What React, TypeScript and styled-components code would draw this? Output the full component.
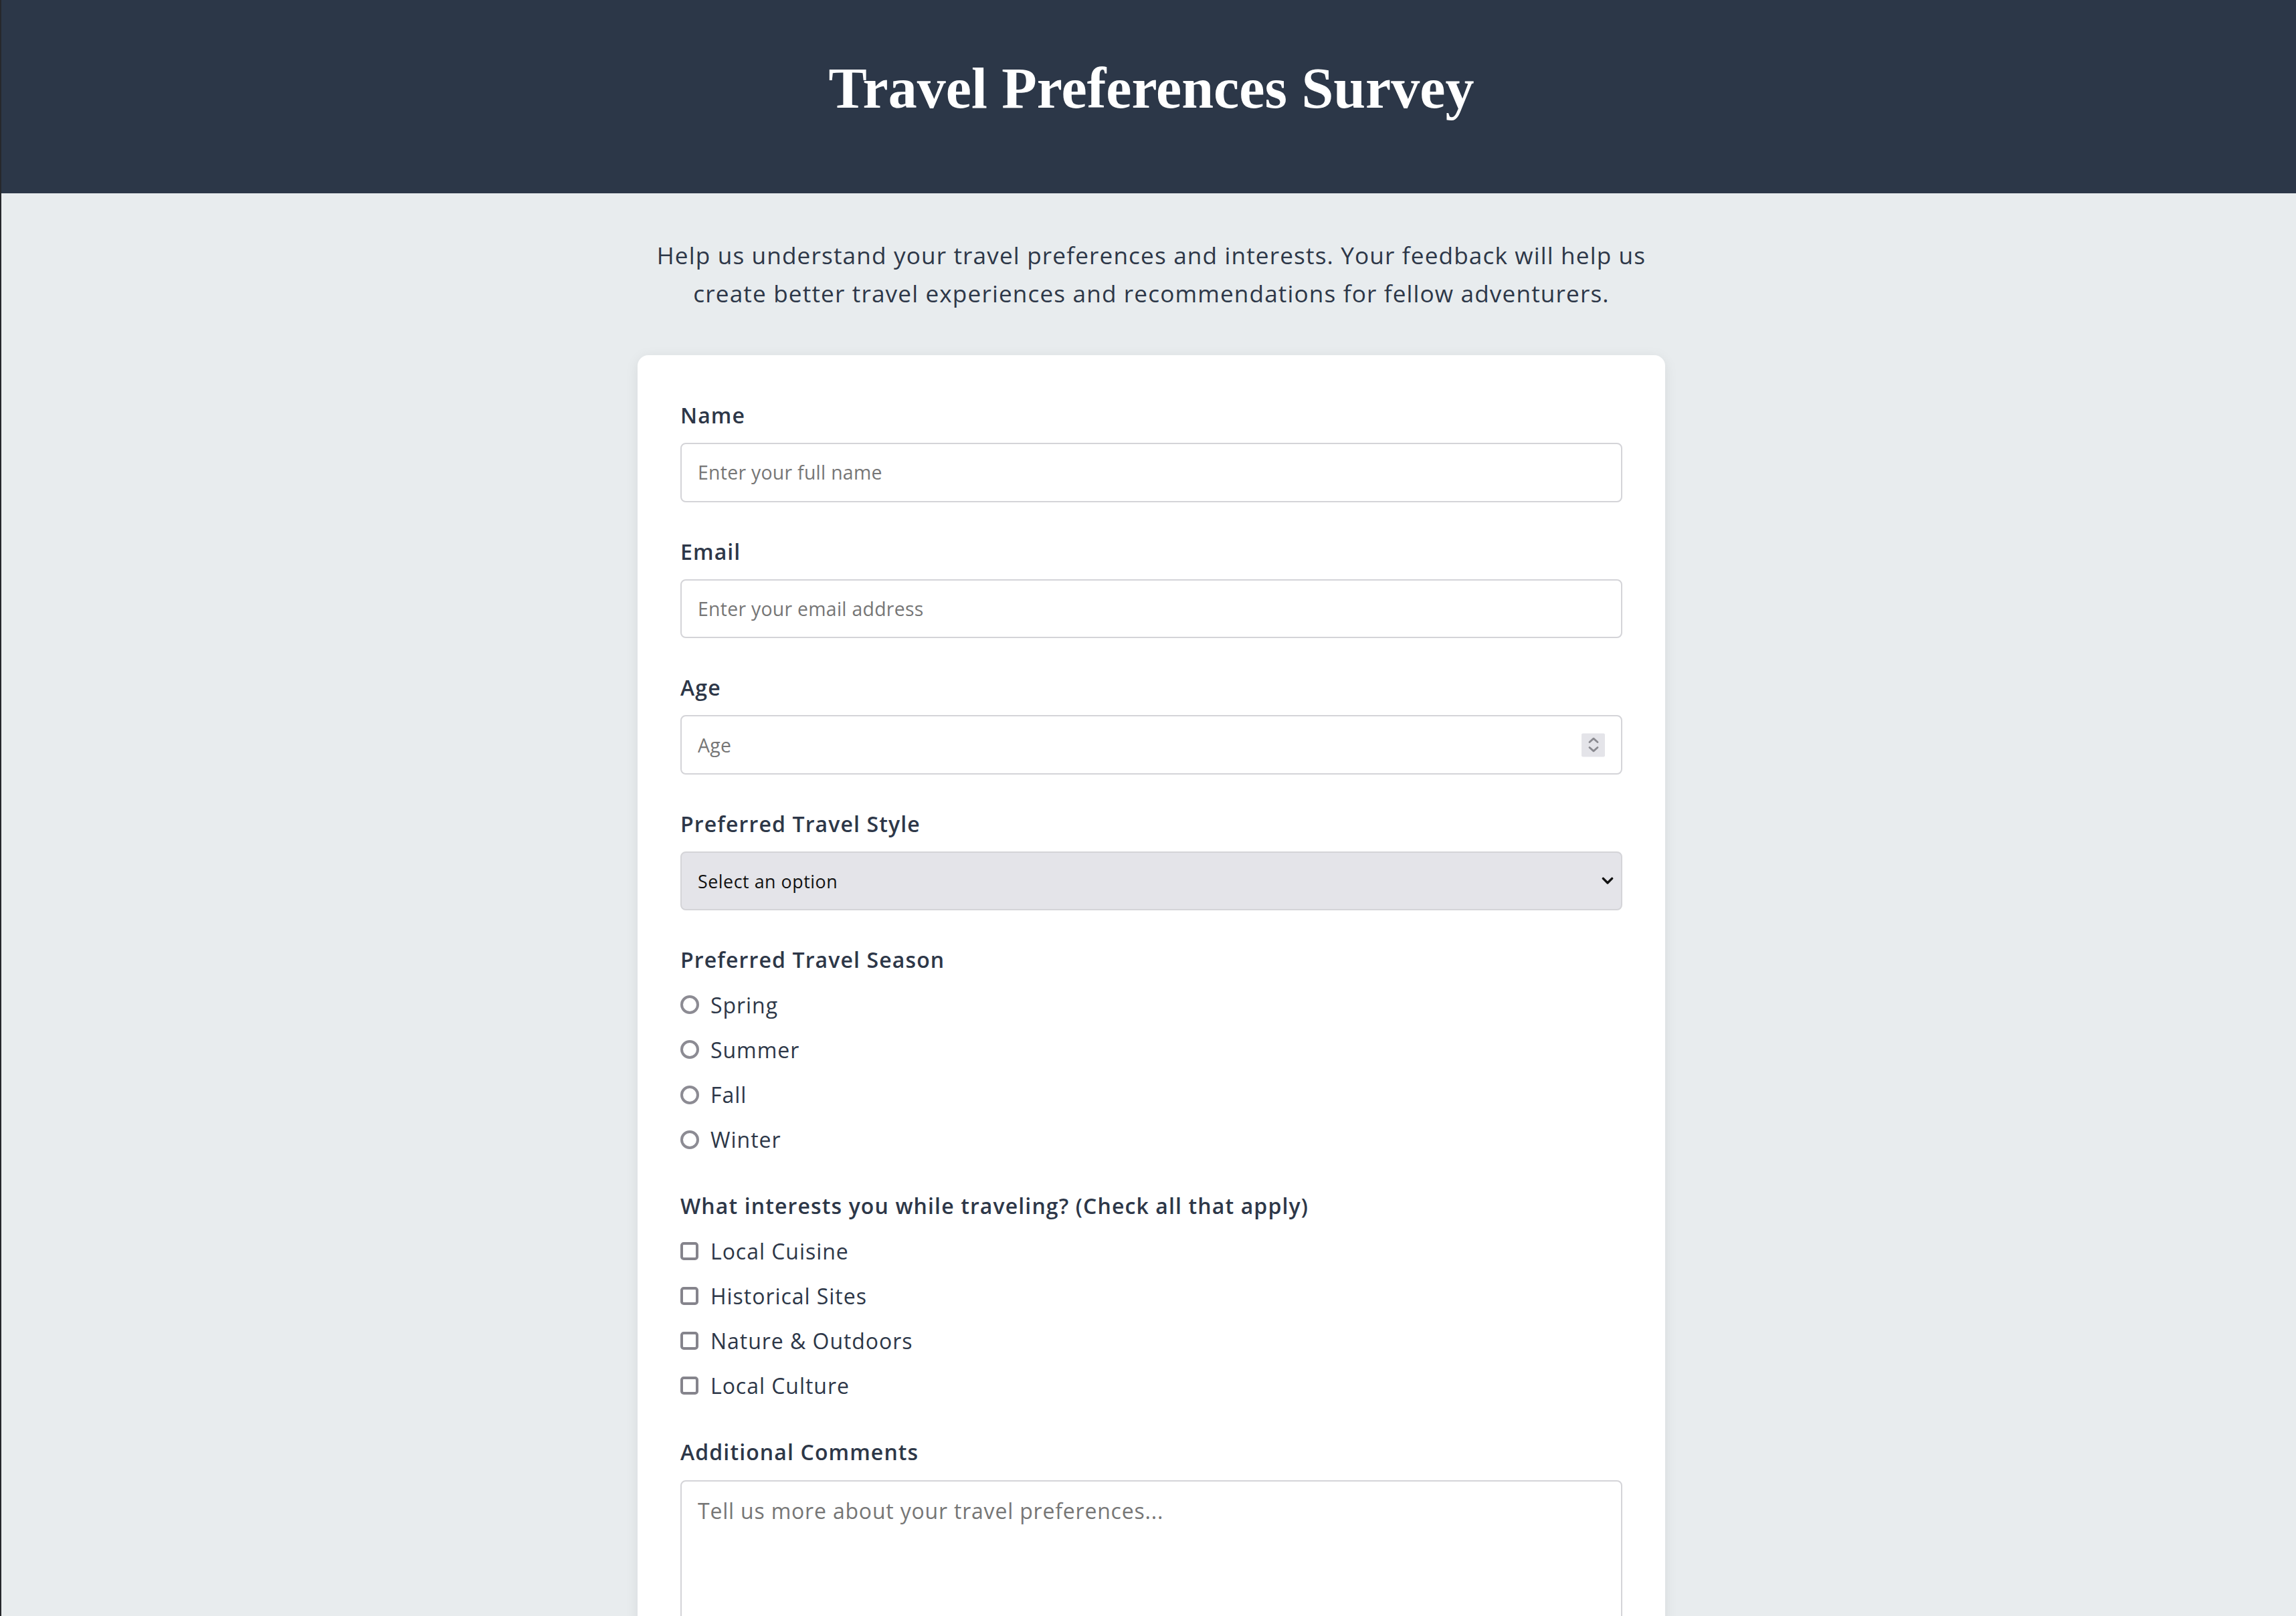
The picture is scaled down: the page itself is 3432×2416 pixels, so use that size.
import React from "react";
import styled, { createGlobalStyle } from "styled-components";

const GlobalStyle = createGlobalStyle`
  html { zoom: 2; }
  *, *::before, *::after { box-sizing: border-box; }
  body {
    margin: 0;
    background: #e8ecee;
    border-left: 1px solid #26282c;
    font-family: "Open Sans", "Noto Sans", Arial, sans-serif;
    letter-spacing: 0.03em;
    color: #2d3748;
  }
`;

const Header = styled.header`
  background: #2c3748;
  padding: 41px 16px 53.5px 20px;
  text-align: center;
`;

const Title = styled.h1`
  margin: 0;
  font-family: "Liberation Serif", "Times New Roman", serif;
  font-weight: 700;
  font-size: 43px;
  line-height: 50px;
  letter-spacing: 0;
  color: #ffffff;
`;

const Main = styled.main`
  max-width: 804px;
  margin: 0 auto;
  padding: 32px 16px 32px 20px;
`;

const Intro = styled.p`
  max-width: 745px;
  margin: 0 auto 32px;
  text-align: center;
  font-size: 17.6px;
  line-height: 28.5px;
  letter-spacing: 0.032em;
  color: #2d3748;
`;

const Card = styled.form`
  background: #ffffff;
  border-radius: 8px;
  padding: 32px;
  box-shadow: 0 2px 10px rgba(0, 0, 0, 0.08);
`;

const Group = styled.div`
  margin-bottom: 24px;
`;

const Label = styled.label`
  display: block;
  margin-bottom: 8px;
  font-size: 16px;
  font-weight: 650;
  line-height: 25.6px;
  letter-spacing: 0.035em;
  color: #2d3748;
`;

const fieldBase = `
  display: block;
  width: 100%;
  border: 1px solid #d4d4d8;
  border-radius: 4px;
  font-family: inherit;
  outline: none;
`;

const TextInput = styled.input`
  ${fieldBase}
  height: 44.2px;
  padding: 0 12px;
  font-size: 14.2px;
  letter-spacing: 0.01em;
  color: #2d3748;
  background: #ffffff;
  &::placeholder { color: #767676; }
  &::-webkit-inner-spin-button,
  &::-webkit-outer-spin-button { -webkit-appearance: none; margin: 0; }
  -moz-appearance: textfield;
`;

const FieldWrap = styled.div`
  position: relative;
`;

const Spinner = styled.div`
  position: absolute;
  right: 13px;
  top: 50%;
  transform: translateY(-50%);
  width: 17.5px;
  height: 17.5px;
  background: #e4e4e9;
  border-radius: 1px;
  display: flex;
  align-items: center;
  justify-content: center;
  pointer-events: none;
`;

const Select = styled.select`
  ${fieldBase}
  appearance: none;
  -webkit-appearance: none;
  height: 44.2px;
  padding: 0 12px;
  font-size: 13.4px;
  letter-spacing: 0.02em;
  color: #111111;
  background: #e4e4e9;
`;

const SelectChevron = styled.svg`
  position: absolute;
  right: 6.5px;
  top: 50%;
  transform: translateY(-50%);
  pointer-events: none;
`;

const OptionRow = styled.label`
  display: flex;
  align-items: center;
  margin-bottom: 8px;
  font-size: 16px;
  line-height: 25.6px;
  color: #2d3748;
`;

const Radio = styled.input.attrs({ type: "radio" })`
  appearance: none;
  -webkit-appearance: none;
  width: 14px;
  height: 14px;
  margin: 0 8.5px 0 0;
  border: 2px solid #8c8b93;
  border-radius: 50%;
  background: #ffffff;
  flex-shrink: 0;
`;

const Checkbox = styled.input.attrs({ type: "checkbox" })`
  appearance: none;
  -webkit-appearance: none;
  width: 13.5px;
  height: 13.5px;
  margin: 0 9px 0 0;
  border: 2px solid #85848c;
  border-radius: 2.5px;
  background: #ffffff;
  flex-shrink: 0;
`;

const TextArea = styled.textarea`
  ${fieldBase}
  height: 109px;
  padding: 12px;
  font-size: 16px;
  line-height: 20px;
  letter-spacing: 0.025em;
  color: #2d3748;
  background: #ffffff;
  resize: vertical;
  &::placeholder { color: #767676; }
`;

const seasons = ["Spring", "Summer", "Fall", "Winter"];
const interests = ["Local Cuisine", "Historical Sites", "Nature & Outdoors", "Local Culture"];

export default function App() {
  return (
    <>
      <GlobalStyle />
      <Header>
        <Title>Travel Preferences Survey</Title>
      </Header>
      <Main>
        <Intro>
          Help us understand your travel preferences and interests. Your feedback will help us
          create better travel experiences and recommendations for fellow adventurers.
        </Intro>
        <Card onSubmit={(e) => e.preventDefault()}>
          <Group>
            <Label htmlFor="name">Name</Label>
            <TextInput id="name" type="text" placeholder="Enter your full name" />
          </Group>
          <Group>
            <Label htmlFor="email">Email</Label>
            <TextInput id="email" type="email" placeholder="Enter your email address" />
          </Group>
          <Group>
            <Label htmlFor="age">Age</Label>
            <FieldWrap>
              <TextInput id="age" type="number" placeholder="Age" />
              <Spinner>
                <svg width="9" height="13" viewBox="0 0 9 13" fill="none">
                  <path d="M1.5 4.5 L4.5 1.8 L7.5 4.5" stroke="#8a8a90" strokeWidth="1.4" strokeLinecap="round" strokeLinejoin="round" />
                  <path d="M1.5 8.5 L4.5 11.2 L7.5 8.5" stroke="#8a8a90" strokeWidth="1.4" strokeLinecap="round" strokeLinejoin="round" />
                </svg>
              </Spinner>
            </FieldWrap>
          </Group>
          <Group>
            <Label htmlFor="style">Preferred Travel Style</Label>
            <FieldWrap>
              <Select id="style" defaultValue="">
                <option value="">Select an option</option>
                <option value="adventure">Adventure</option>
                <option value="relaxation">Relaxation</option>
                <option value="cultural">Cultural</option>
                <option value="luxury">Luxury</option>
                <option value="budget">Budget</option>
              </Select>
              <SelectChevron width="9" height="6" viewBox="0 0 9 6" fill="none">
                <path d="M1.2 1.2 L4.5 4.5 L7.8 1.2" stroke="#111" strokeWidth="1.7" strokeLinecap="round" strokeLinejoin="round" />
              </SelectChevron>
            </FieldWrap>
          </Group>
          <Group>
            <Label as="div">Preferred Travel Season</Label>
            {seasons.map((s) => (
              <OptionRow key={s}>
                <Radio name="season" value={s.toLowerCase()} />
                {s}
              </OptionRow>
            ))}
          </Group>
          <Group>
            <Label as="div">What interests you while traveling? (Check all that apply)</Label>
            {interests.map((s) => (
              <OptionRow key={s}>
                <Checkbox name="interests" value={s} />
                {s}
              </OptionRow>
            ))}
          </Group>
          <Group>
            <Label htmlFor="comments">Additional Comments</Label>
            <TextArea id="comments" placeholder="Tell us more about your travel preferences..." />
          </Group>
        </Card>
      </Main>
    </>
  );
}
